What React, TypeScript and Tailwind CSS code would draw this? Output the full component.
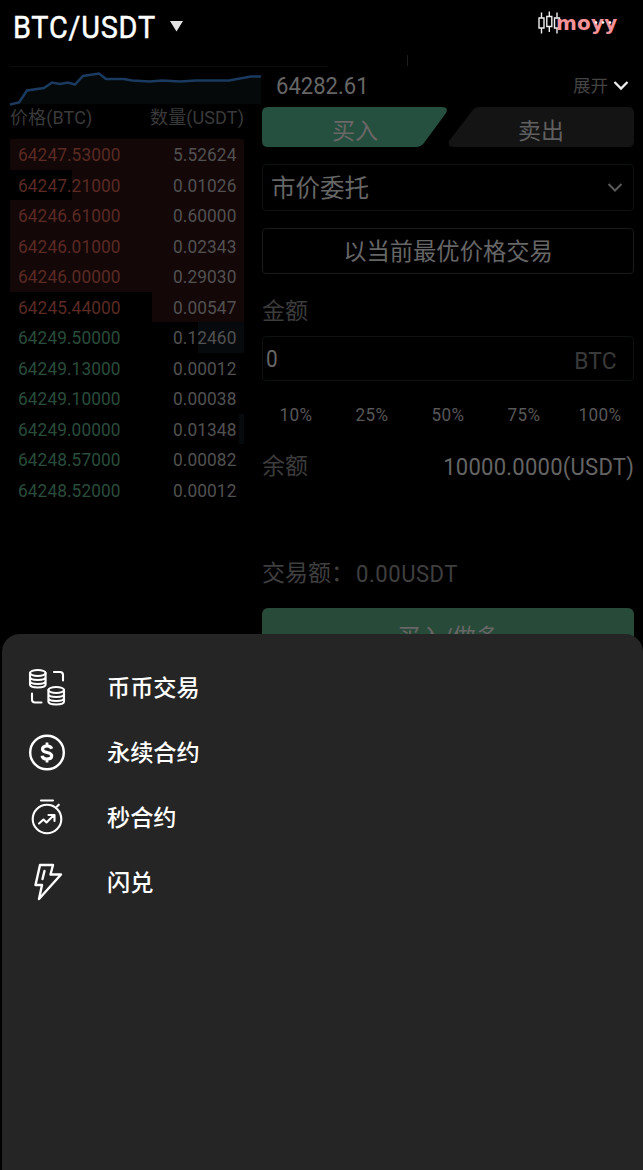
import { ReactNode } from "react";

const asks = [
  { price: "64247.53000", amount: "5.52624", depth: 234 },
  { price: "64247.21000", amount: "0.01026", depth: 172 },
  { price: "64246.61000", amount: "0.60000", depth: 234 },
  { price: "64246.01000", amount: "0.02343", depth: 234 },
  { price: "64246.00000", amount: "0.29030", depth: 234 },
  { price: "64245.44000", amount: "0.00547", depth: 92 },
];

const bids = [
  { price: "64249.50000", amount: "0.12460", depth: 46 },
  { price: "64249.13000", amount: "0.00012", depth: 0 },
  { price: "64249.10000", amount: "0.00038", depth: 0 },
  { price: "64249.00000", amount: "0.01348", depth: 5 },
  { price: "64248.57000", amount: "0.00082", depth: 0 },
  { price: "64248.52000", amount: "0.00012", depth: 0 },
];

function BookRow({ price, amount, depth, side }: { price: string; amount: string; depth: number; side: "ask" | "bid" }) {
  return (
    <div className="relative h-[30.5px] w-[234px]">
      <div
        className={`absolute inset-y-0 right-0 ${side === "ask" ? "bg-[#140707]" : "bg-[#060a0c]"}`}
        style={{ width: depth }}
      />
      <div className="relative flex h-full items-center justify-between pl-2 pr-2 pt-[3px] text-[19.2px] tracking-[0.1px]">
        <span className={`origin-left scale-x-90 ${side === "ask" ? "text-[#5a2a23]" : "text-[#294c3b]"}`}>{price}</span>
        <span className="origin-right scale-x-90 text-[#515151]">{amount}</span>
      </div>
    </div>
  );
}

function MenuItem({ icon, label }: { icon: ReactNode; label: string }) {
  return (
    <div className="flex h-[65px] items-center pl-[25px]">
      <svg
        width="40"
        height="40"
        viewBox="0 0 40 40"
        fill="none"
        stroke="#fff"
        strokeWidth="2.1"
        strokeLinecap="round"
        strokeLinejoin="round"
      >
        {icon}
      </svg>
      <span className="ml-10 pt-[3px] text-[23.2px] leading-none font-medium text-white">{label}</span>
    </div>
  );
}

const coinsIcon = (
  <>
    <ellipse cx="10.8" cy="5" rx="7.8" ry="3" />
    <path d="M3 5v11.500c0 1.800 3.500 3 7.800 3s7.800-1.200 7.800-3V5M3 9c0 1.800 3.500 3 7.800 3s7.800-1.200 7.800-3M3 13c0 1.800 3.500 3 7.800 3s7.800-1.200 7.800-3" />
    <ellipse cx="29.2" cy="22" rx="7.8" ry="3" />
    <path d="M21.400 22v11.500c0 1.800 3.500 3 7.800 3s7.800-1.200 7.800-3V22M21.400 26c0 1.800 3.500 3 7.800 3s7.800-1.200 7.800-3M21.400 30c0 1.800 3.500 3 7.800 3s7.800-1.200 7.800-3" />
    <path d="M27 4h6q3 0 3 3v5.500M5 25.500v6q0 3 3 3h6.500" />
  </>
);

const dollarIcon = (
  <>
    <circle cx="20" cy="19.5" r="16.8" strokeWidth="2.4" />
    <path
      d="M24.700 15.700c-.5-1.800-2.200-2.700-4.700-2.700s-4.500 1.100-4.500 3.200c0 4.300 9.200 2.300 9.200 6.500 0 2.100-1.900 3.300-4.700 3.300s-4.600-1.200-4.900-3.300"
      strokeWidth="3.2"
      strokeLinecap="butt"
    />
    <path d="M20 9.500v4M20 25.500v4" strokeWidth="2.8" strokeLinecap="butt" />
  </>
);

const timerIcon = (
  <>
    <path d="M14 2.500h12M30 8.500l1.800-1.800" />
    <circle cx="20" cy="21" r="14.3" />
    <path d="M12 25.500l4.500-4 3 3 7-7M21.500 17h6v6" />
  </>
);

const boltIcon = (
  <>
    <path d="M13 2h13l-2.500 9.500H34L12 36l3-14H8.500z" strokeWidth="2.4" />
    <path d="M17.500 8l-2 8" strokeWidth="2.4" />
  </>
);

export default function App() {
  return (
    <div className="relative h-[1170px] w-full overflow-hidden bg-black font-[Roboto,'Noto_Sans_CJK_SC',sans-serif]">
      {/* Header */}
      <header className="flex h-[66px] items-start justify-between pl-[12.5px] pr-[25px]">
        <div className="flex h-[53px] items-center">
          <h1 className="w-[142px] pt-px text-[32px] whitespace-nowrap text-white">
            <span className="inline-block origin-left scale-x-90 tracking-[0.9px] [-webkit-text-stroke:0.5px_white]">BTC/USDT</span>
          </h1>
          <svg className="ml-[15px]" width="13" height="11" viewBox="0 0 13 11">
            <path d="M0 0h13L6.500 10.500z" fill="#e5e5e5" />
          </svg>
        </div>
        <div className="relative mt-[11px] h-6 w-20">
          <svg width="80" height="24" viewBox="0 0 80 24" fill="none" stroke="#eee" strokeWidth="1.4">
            <path d="M3.500 1.500v5.500m0 10v5.500M1 7h5v10H1zM11.300.5v5m0 10v5.500M8.800 5.500h5v10h-5zM19 1.500v5.500m0 10v5.500M16.500 7h5v10h-5z" />
          </svg>
          <span className="absolute -top-px left-[18px] text-[20px] leading-[26px] font-bold tracking-[0.2px] text-[#f49298] font-['DejaVu_Sans',sans-serif]">
            moyy
          </span>
          <svg className="absolute left-[56px] top-[10px]" width="18" height="3" viewBox="0 0 18 3" fill="#fff">
            <circle cx="2" cy="1.5" r="1.3" />
            <circle cx="9" cy="1.5" r="1.3" />
            <circle cx="16" cy="1.5" r="1.3" />
          </svg>
          <div className="absolute left-[-131px] top-[44px] h-[11px] w-px bg-[#1b1d1d]" />
        </div>
      </header>

      <main className="flex">
        {/* Order book */}
        <section className="w-[262px] shrink-0 pl-[10px]">
          <svg className="overflow-visible" width="251" height="41" viewBox="0 0 251 41" fill="none">
            <path d="M0 .5h318" stroke="#0b0c0c" />
            <path d="M0 39l9-2 8-12 17-2.500 8-5.500 8 1.500 8-1.500 7 2 8-8.500 16-2.500 7 5.500h18l8 2 18 1 12-1 18 1 16-1h33l22-4h10V38H0z" fill="#05090a" />
            <path
              d="M0 38.500l9-2 8-12 17-2.500 8-5.500 8 1.500 8-1.500 7 2 8-8.500 16-2.500 7 5.500h18l8 1.500 18 1 12-1 18 1 16-1h33l22-4h10"
              stroke="#1b3a5f"
              strokeWidth="2.5"
            />
          </svg>
          <div className="flex h-8 w-[234px] items-start justify-between text-[18px] leading-[22px] tracking-[0.1px] text-[#3a3a3a]">
            <span>价格(BTC)</span>
            <span>数量(USDT)</span>
          </div>
          {asks.map((row) => (
            <BookRow key={row.price} {...row} side="ask" />
          ))}
          {bids.map((row) => (
            <BookRow key={row.price} {...row} side="bid" />
          ))}
        </section>

        {/* Order form */}
        <section className="w-[372px]">
          <div className="flex h-[41px] items-center justify-between pl-[14px] pr-[5px]">
            <span className="origin-left scale-x-90 text-[24.5px] leading-none text-[#666]">64282.61</span>
            <div className="flex items-center gap-[5px]">
              <span className="text-[17.5px] leading-none text-[#444]">展开</span>
              <svg className="-mt-[3px]" width="16" height="11" viewBox="0 0 16 11" fill="none" stroke="#eee" strokeWidth="2.3">
                <path d="M1.500 2L8 8.500 14.500 2" />
              </svg>
            </div>
          </div>

          <div className="grid grid-cols-2 text-center text-[23px] leading-[49px]">
            <div className="relative h-10">
              <svg className="absolute inset-0" width="186" height="40" viewBox="0 0 186 40">
                <path d="M6 0h174q7 0 4 6l-22 30q-3 4-8 4H6q-6 0-6-6V6q0-6 6-6z" fill="#255040" />
              </svg>
              <span className="relative text-[#6c6667]">买入</span>
            </div>
            <div className="relative h-10">
              <svg className="absolute inset-0" width="186" height="40" viewBox="0 0 186 40">
                <path d="M31 0h149q6 0 6 6v28q0 6-6 6H6q-7 0-5-6L24 4q3-4 7-4z" fill="#141414" />
              </svg>
              <span className="relative text-[#606060]">卖出</span>
            </div>
          </div>

          <div className="mt-[17px] flex h-[47px] items-center justify-between rounded border border-[#0f1212] pl-2 pr-[10px]">
            <span className="pt-1 text-[24.5px] leading-none text-[#666]">市价委托</span>
            <svg width="16" height="11" viewBox="0 0 16 11" fill="none" stroke="#5a5a5a" strokeWidth="2">
              <path d="M1.500 2L8 8.500 14.500 2" />
            </svg>
          </div>
          <div className="mt-[17px] flex h-[46px] items-center justify-center rounded border border-[#181b1b] pt-[3px] text-[23.3px] text-[#666]">
            以当前最优价格交易
          </div>

          <div className="mt-[26px] text-[23px] leading-6 text-[#3c3c3c]">金额</div>
          <div className="mt-[12px] flex h-[45px] items-center justify-between rounded border border-[#0f1212] pl-[3px] pr-[16px] pt-[4px]">
            <span className="origin-left scale-x-90 text-[23px] text-[#666]">0</span>
            <span className="origin-right scale-x-95 text-[24px] tracking-[0.2px] text-[#393939]">BTC</span>
          </div>

          <div className="-mx-[4px] mt-[22px] grid grid-cols-5 text-center text-[19px] leading-6 tracking-[0.4px] text-[#575757]">
            <span className="scale-x-90">10%</span>
            <span className="scale-x-90">25%</span>
            <span className="scale-x-90">50%</span>
            <span className="scale-x-90">75%</span>
            <span className="scale-x-90">100%</span>
          </div>

          <div className="mt-[27px] flex h-[26px] items-center justify-between leading-6">
            <span className="text-[23px] text-[#3c3c3c]">余额</span>
            <span className="origin-right scale-x-90 text-[24.5px] tracking-[0.25px] text-[#646464]">10000.0000(USDT)</span>
          </div>

          <div className="mt-[82px] flex items-center leading-6 text-[#3f3f3f]">
            <span className="text-[23px]">交易额：</span>
            <span className="ml-[2px] origin-left scale-x-90 text-[24.5px] tracking-[0.6px]">0.00USDT</span>
          </div>
          <div className="mt-[22px] h-[50px] rounded-md bg-[#274a39] text-center text-[23px] leading-[60px] text-[#6a6667]">
            买入/做多
          </div>
        </section>
      </main>

      {/* Trade type sheet */}
      <div className="absolute bottom-0 left-[2px] right-0 top-[634px] rounded-t-[18px] bg-[#252525] pt-[21px]">
        <MenuItem icon={coinsIcon} label="币币交易" />
        <MenuItem icon={dollarIcon} label="永续合约" />
        <MenuItem icon={timerIcon} label="秒合约" />
        <MenuItem icon={boltIcon} label="闪兑" />
      </div>
    </div>
  );
}
